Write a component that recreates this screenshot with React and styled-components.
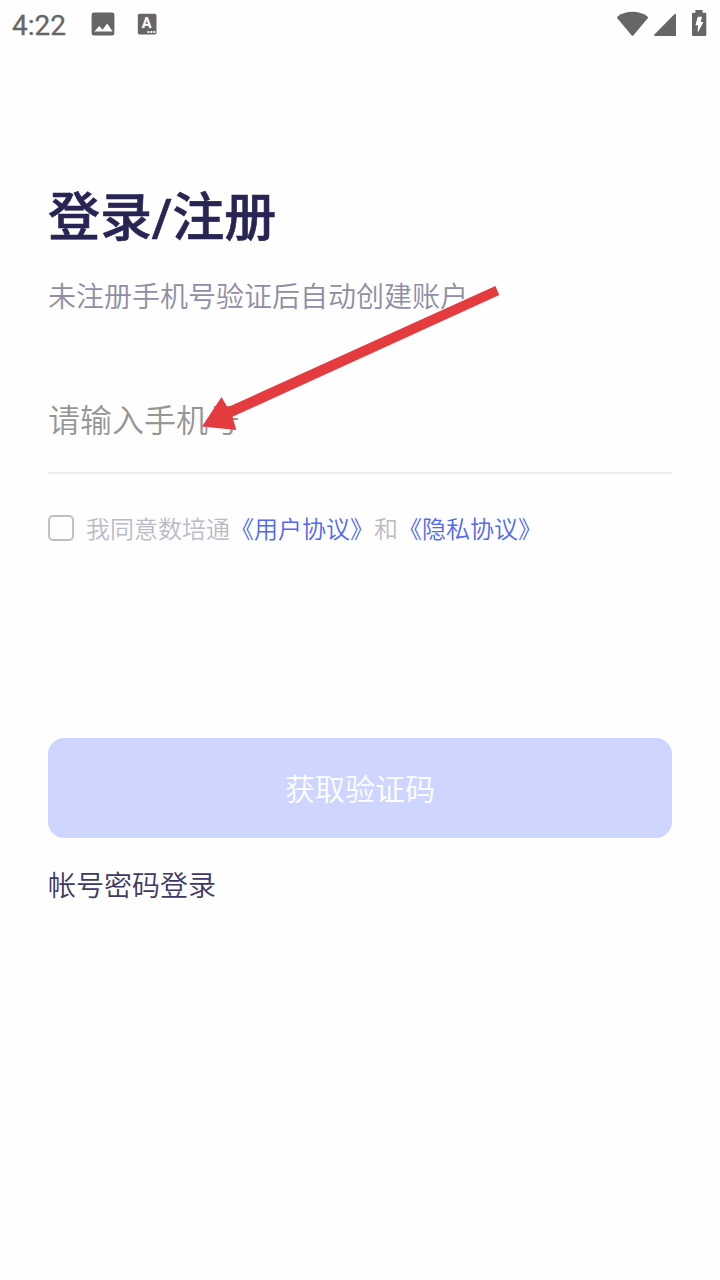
import React, { useState } from 'react';
import styled, { createGlobalStyle } from 'styled-components';

function StatusBar() {
  return (
    <StatusWrapper>
      <Clock>4:22</Clock>
      <ImageIcon viewBox='0 0 24 24'>
        <path d='M2.8 .6h18.4a2.2 2.2 0 0 1 2.2 2.2v18.4a2.2 2.2 0 0 1-2.2 2.2H2.8a2.2 2.2 0 0 1-2.2-2.2V2.8A2.2 2.2 0 0 1 2.8.6z' fill='#666666' />
        <path d='M3.4 19.5l4.8-5.6 3.4 3.9 4.6-6.2 5.4 7.9z' fill='#ffffff' />
      </ImageIcon>
      <KeyboardIcon viewBox='0 0 20 24'>
        <rect x='.8' y='1.8' width='18.7' height='20.6' rx='1.6' fill='#666666' />
        <text x='9.6' y='16.4' textAnchor='middle'>A</text>
        <path d='M10.4 20.1h1.9M13.4 20.1h1.9M16.4 20.1h1.9' stroke='#ffffff' strokeWidth='2' />
      </KeyboardIcon>
      <SystemIcons viewBox='0 0 92 30'>
        {/* Wifi */}
        <path d='M1.3 12.2Q.7 11.2 1.6 10.4Q8 5.8 16.5 5.8T31.4 10.4Q32.3 11.2 31.7 12.2L17.5 29.3Q16.5 30.3 15.5 29.3z' fill='#666666' />
        {/* Signal */}
        <path d='M38.6 30Q37.6 29.4 38.4 28.4L58.6 8.1Q60 7.2 60 8.8V30z' fill='#666666' />
        {/* Battery */}
        <path d='M79.4 4h7.2v2.7h2.4a1.3 1.3 0 0 1 1.3 1.3v20.7a1.3 1.3 0 0 1-1.3 1.3H77.3a1.3 1.3 0 0 1-1.3-1.3V8a1.3 1.3 0 0 1 1.3-1.3h2.1z' fill='#666666' />
        <path d='M81.8 10.8h4.2l-1.3 5.2h2.7l-5.6 10.8v-7.5h-2.4z' fill='#ffffff' />
      </SystemIcons>
    </StatusWrapper>
  );
}

function App() {
  const [phone, setPhone] = useState('');
  const [agreed, setAgreed] = useState(false);

  return (
    <Page>
      <GlobalStyle />
      <StatusBar />
      <LoginForm onSubmit={e => e.preventDefault()}>
        <Title>登录/注册</Title>
        <Subtitle>未注册手机号验证后自动创建账户</Subtitle>
        <PhoneInput
          type='tel'
          value={phone}
          placeholder='请输入手机号'
          onChange={e => setPhone(e.target.value)}
        />
        <Agreement>
          <Checkbox
            type='checkbox'
            checked={agreed}
            onChange={() => setAgreed(!agreed)}
          />
          <AgreementText>
            我同意数培通<Link>《用户协议》</Link>和<Link>《隐私协议》</Link>
          </AgreementText>
        </Agreement>
        <SubmitButton type='submit'>获取验证码</SubmitButton>
        <PasswordLogin>帐号密码登录</PasswordLogin>
      </LoginForm>
      <Arrow viewBox='0 0 300 148'>
        <path d='M2 142.5L21.5 113L27.5 123.3L295.4 2L299.3 11L32.5 132.8L36.3 146z' fill='#e43c3e' />
      </Arrow>
    </Page>
  );
}

export default App;

const GlobalStyle = createGlobalStyle`
  * {
    box-sizing: border-box;
  }

  body {
    margin: 0;
    background: #fefefe;
    font-family: Roboto, 'Noto Sans CJK SC', sans-serif;
    font-weight: 350;
  }
`;

const Page = styled.div`
  position: relative;
  min-height: 1280px;
  background: #fefefe;
`;

const StatusWrapper = styled.div`
  display: flex;
  align-items: center;
  height: 48px;
  padding: 0 13px 0 12px;
`;

const Clock = styled.span`
  width: 79px;
  padding-top: 4px;
  font-size: 28px;
  font-weight: 400;
  line-height: 34px;
  color: #666666;
  -webkit-text-stroke: 0.3px #666666;
`;

const ImageIcon = styled.svg`
  width: 24px;
  height: 24px;
`;

const KeyboardIcon = styled.svg`
  width: 20px;
  height: 24px;
  margin-left: 22px;

  text {
    font-family: Roboto, sans-serif;
    font-size: 14.5px;
    font-weight: 800;
    fill: #ffffff;
  }
`;

const SystemIcons = styled.svg`
  width: 92px;
  height: 30px;
  margin: 0 -1px 12px auto;
  align-self: flex-end;
`;

const LoginForm = styled.form`
  display: flex;
  flex-direction: column;
  padding: 136px 48px 0;
`;

const Title = styled.h1`
  margin: 0;
  font-size: 52px;
  font-weight: 500;
  line-height: 70px;
  color: #282554;
  -webkit-text-stroke: 0.6px #282554;
`;

const Subtitle = styled.p`
  margin: 24px 0 0;
  font-size: 28px;
  line-height: 40px;
  color: #8f8ea5;
`;

const PhoneInput = styled.input`
  height: 106px;
  margin-top: 50px;
  padding: 2px 0 0;
  border: 0;
  border-bottom: 2px solid #ebebf5;
  outline: 0;
  background: transparent;
  font-family: inherit;
  font-size: 32px;
  font-weight: inherit;
  color: #282554;

  &::placeholder {
    color: #969696;
    opacity: 1;
  }
`;

const Agreement = styled.label`
  display: flex;
  align-items: center;
  gap: 12px;
  height: 36px;
  margin-top: 36px;
  font-size: 24px;
  line-height: 36px;
  color: #bbbac8;
`;

const AgreementText = styled.span`
  padding-top: 4px;
`;

const Checkbox = styled.input`
  appearance: none;
  width: 26px;
  height: 26px;
  margin: 0;
  border: 2px solid #bfbecc;
  border-radius: 5px;

  &:checked {
    background: #5b70f3;
  }
`;

const Link = styled.span`
  color: #5369f3;
`;

const SubmitButton = styled.button`
  height: 100px;
  margin-top: 192px;
  padding: 0 0 2px;
  border: 0;
  border-radius: 16px;
  background: #ced6ff;
  font-family: inherit;
  font-size: 30px;
  font-weight: inherit;
  color: #ffffff;
`;

const PasswordLogin = styled.span`
  margin-top: 29px;
  font-size: 28px;
  line-height: 40px;
  color: #3d3964;
`;

/* Pointer that lies over the phone field */
const Arrow = styled.svg`
  position: absolute;
  top: 284px;
  left: 200px;
  width: 300px;
  height: 148px;
  pointer-events: none;
`;
